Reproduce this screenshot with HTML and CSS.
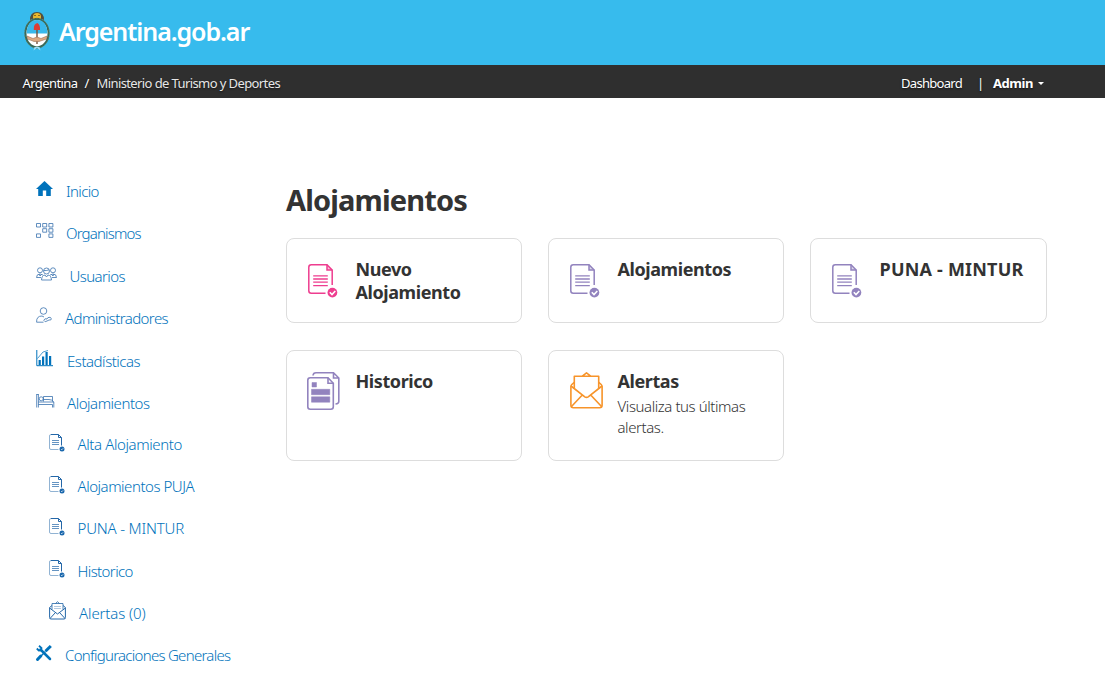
FILE: index.html
```
<!DOCTYPE html>
<html lang="es">
<head>
<meta charset="utf-8">
<title>Alojamientos - Argentina.gob.ar</title>
<link rel="stylesheet" href="styles.css">
</head>
<body>
<svg class="sprite" aria-hidden="true">
  <symbol id="doc" viewBox="0 0 30 34">
    <g fill="none" stroke="currentColor" stroke-width="1.5">
      <path d="M17.5 29.2H3.3Q.8 29.2 .8 26.7V3.3Q.8 .8 3.3 .8H19L24.2 6V21"/>
      <path d="M19 .8V6H24.2" fill="currentColor" fill-opacity=".3"/>
      <path d="M5.2 11.8H19.8M5.2 15H19.8M5.2 18.2H19.8M5.2 21.6H19.8" stroke-width="1.3"/>
    </g>
    <circle cx="24.4" cy="28.6" r="4.9" fill="currentColor"/>
    <path d="M21.8 28.3L24 30.5L27.3 27" fill="none" stroke="#fff" stroke-width="1.6"/>
  </symbol>
  <symbol id="doc-sm" viewBox="0 0 16 18">
    <g fill="none" stroke="#2467a8">
      <path d="M9.5 15.5H2Q.5 15.5 .5 14V2Q.5 .5 2 .5" opacity=".5"/>
      <path d="M2 .5H9.5L12.5 3.5V11.5"/><path d="M9.5 .5V3.5H12.5"/>
      <path d="M3 6.5H10M3 8.5H10M3 10.5H10" opacity=".7"/>
    </g>
    <circle cx="13" cy="15" r="2.5" fill="#1b68ad"/>
    <path d="M12 15l.8.8 1.4-1.5" fill="none" stroke="#fff" stroke-width=".7"/>
  </symbol>
</svg>

<header class="brand">
  <svg class="crest" viewBox="0 0 28 40">
    <path d="M7 9Q7 1 14 1T21 9Q14 5 7 9Z" fill="#54503c"/>
    <circle cx="14" cy="6" r="4" fill="#e9b92d"/>
    <path d="M11 4.5h2m2 0h2M12 7.5h4" stroke="#71551d" stroke-width=".8"/>
    <ellipse cx="14" cy="22.2" rx="11.5" ry="14.2" fill="#fff" stroke="#35685a" stroke-width="2"/>
    <ellipse cx="14" cy="22.2" rx="12.2" ry="15" fill="none" stroke="#7c8050" stroke-width=".7" stroke-dasharray="1.5 1.5"/>
    <path d="M3.6 22.5Q4 9 14 9T24.4 22.5Z" fill="#38b8ec"/>
    <path d="M14 18V33" stroke="#75513b" stroke-width="1.4"/>
    <path d="M10.8 19Q10.4 12.5 14.5 12Q17.4 14 17 19Z" fill="#dc3d36"/>
    <path d="M4 25L10 27.5L14 26L18 27.5L24 25L23.5 28L16 30.5L11 30.5L4.5 28Z" fill="#dda982" stroke="#9d7158" stroke-width=".6"/>
    <path d="M11.5 36L10.5 39.5L14 37L17.5 39.5L16.5 36Z" fill="#9bdcf5"/>
  </svg>
  <span class="brand-name">Argentina.gob.ar</span>
</header>

<nav class="topbar">
  <div class="crumbs"><span class="crumb-home">Argentina</span><span class="crumb-sep">/</span><span class="crumb-here">Ministerio de Turismo y Deportes</span></div>
  <div class="account"><span class="dash">Dashboard</span><span class="bar">|</span><b class="admin">Admin</b><i class="caret"></i></div>
</nav>

<div class="page">
  <ul class="menu">
    <li><span class="ico"><svg width="17" height="15" viewBox="0 0 17 15"><path d="M8.5 0L17 8H14.8V15H10.2V9.5H6.8V15H2.2V8H0Z" fill="currentColor"/></svg></span><a class="s6">Inicio</a></li>
    <li><span class="ico"><svg width="18" height="15" viewBox="0 0 18 15"><g class="thin"><path d="M.5.5h4v3.5h-4zM6.7.5h4v3.5h-4zM12.9.5h4v3.5h-4zM6.7 5.7h4v3.5h-4zM12.9 5.7h4v3.5h-4zM.5 10.9h4v3.5h-4zM12.9 10.9h4v3.5h-4z"/></g></svg></span><a class="s8">Organismos</a></li>
    <li class="low"><span class="ico wide"><svg width="21" height="14" viewBox="0 0 21 14"><g class="thin"><circle cx="4" cy="3.3" r="2.5"/><circle cx="17" cy="3.3" r="2.5"/><circle cx="10.5" cy="4" r="3"/><path d="M.5 10.5Q.5 7 4 7L7 8M20.5 10.5Q20.5 7 17 7L14 8M.5 10.5H5M20.5 10.5H16M5.5 13Q5.8 8.3 9 8L10.5 10L12 8Q15.2 8.3 15.5 13ZM3 7L4 9L5.5 7.5M18 7L17 9L15.5 7.5M8 3.5Q10 4 13 2.8"/></g></svg></span><a class="s5">Usuarios</a></li>
    <li><span class="ico short"><svg width="16" height="16" viewBox="0 0 16 16"><g class="thin"><circle cx="7.5" cy="4" r="3.3"/><path d="M7.5 15.2H.6Q.3 9 6 9L8 10M7.8 13.3Q9 15.8 11 14L13 13Q15.5 13.5 15.3 11.8Q15 10 13 10.3Q11.5 10.5 11 12Q8.5 11 7.8 13.3Z"/></g></svg></span><a class="s5">Administradores</a></li>
    <li class="low"><span class="ico chart"><svg width="17" height="17" viewBox="0 0 17 17"><path d="M.8 0V15.7H17" fill="none" stroke="currentColor" stroke-width="1"/><path d="M2.6 10h2.2v5H2.6zM6 6.5h2.2V15H6zM9.5 2h2.2v13H9.5zM13 6h2.2v9H13z" fill="currentColor"/><path d="M1.5 8.5L7 2L12 .5" fill="none" stroke="currentColor" stroke-width=".7"/></svg></span><a class="s4">Estadísticas</a></li>
    <li class="low"><span class="ico chart"><svg width="19" height="14" viewBox="0 0 19 14"><g class="thin"><path d="M.7 0V13.5M2.4 0V13.5M2.4 10.5H16.5M2.4 8H17.8V13.5M16.5 10.5V13.5M.7 .5H2.4"/><circle cx="5.2" cy="4.8" r="2"/><path d="M7.5 7.5V2.5H16.5V7.5M7.5 5.5H13Q16 5.5 17.8 8"/></g></svg></span><a class="s4">Alojamientos</a></li>
    <li class="sub"><span class="ico"><svg width="16" height="18"><use href="#doc-sm"/></svg></span><a class="s3">Alta Alojamiento</a></li>
    <li class="sub"><span class="ico"><svg width="16" height="18"><use href="#doc-sm"/></svg></span><a class="s4">Alojamientos PUJA</a></li>
    <li class="sub high"><span class="ico"><svg width="16" height="18"><use href="#doc-sm"/></svg></span><a class="s1">PUNA - MINTUR</a></li>
    <li class="sub"><span class="ico"><svg width="16" height="18"><use href="#doc-sm"/></svg></span><a class="s5">Historico</a></li>
    <li class="sub"><span class="ico mail"><svg width="17" height="19" viewBox="0 0 17 19"><g fill="none" stroke="#2467a8"><path d="M.6 6.5V16.5Q.6 18 2 18H15Q16.4 18 16.4 16.5V6.5"/><path d="M.6 7L8.5 13L16.4 7M1 17.5L6.5 11.5M16 17.5L10.5 11.5M.6 6.5L3 4.5M16.4 6.5L14 4.5"/><path d="M3 8.5V2.5H14V8.5M6.5 2.5L8.5 .7L10.5 2.5" opacity=".8"/><path d="M5 5.5H12M5 7.5H12" opacity=".35"/></g></svg></span><a class="s0">Alertas (0)</a></li>
    <li><span class="ico short"><svg width="16" height="16" viewBox="0 0 16 16"><g stroke="currentColor" fill="none"><path d="M4.5 4.5L14 14" stroke-width="2.5" stroke-linecap="round"/><path d="M3 .8L5.5 3L5 5.3L2.8 5.5L.8 3.5" stroke-width="1.8"/><path d="M14.8 1L9.5 6.3" stroke-width="3"/><path d="M9.5 6.5L4.5 11.5" stroke-width="1.4"/><path d="M4.8 11L1.5 14.5" stroke-width="3" stroke-linecap="round"/></g></svg></span><a class="s7">Configuraciones Generales</a></li>
  </ul>

  <main class="content">
    <h1>Alojamientos</h1>
    <div class="cards">
      <section class="card pink"><div class="pic"><svg width="30" height="34"><use href="#doc"/></svg></div><div><h2>Nuevo<br>Alojamiento</h2></div></section>
      <section class="card"><div class="pic"><svg width="30" height="34"><use href="#doc"/></svg></div><div><h2>Alojamientos</h2></div></section>
      <section class="card"><div class="pic"><svg width="30" height="34"><use href="#doc"/></svg></div><div><h2 class="caps">PUNA - MINTUR</h2></div></section>
      <section class="card tall"><div class="pic"><svg width="33" height="38" viewBox="0 0 33 38"><g fill="none" stroke="currentColor" stroke-width="1.6"><path d="M.8 8.3Q.8 5.8 3.3 5.8H21L26.3 11.3V34.7Q26.3 37.2 23.8 37.2H3.3Q.8 37.2 .8 34.7Z"/><path d="M21 5.8V11.3H26.3M6 3.5Q6.3 .8 9 .8H26.5L31.8 6V29.5Q31.8 31.8 28.5 32M26.5 .8V6H31.8"/></g><path d="M5 10.5h4.5V15H5zM4.5 17.3h18.3v5.4H4.5zM4.5 24.8h18.3v5.4H4.5z" fill="currentColor" stroke="currentColor" stroke-width=".5" stroke-linejoin="round"/></svg></div><div><h2>Historico</h2></div></section>
      <section class="card tall orange"><div class="pic"><svg width="33" height="37" viewBox="0 0 33 37"><g fill="none" stroke="currentColor" stroke-width="1.6" stroke-linejoin="round"><path d="M4.3 10.3L1.8 12.5Q.9 13.3 .9 14.5V33.3Q.9 35.8 3.4 35.8H29.6Q32.1 35.8 32.1 33.3V14.5Q32.1 13.3 31.2 12.5L28.7 10.3"/><path d="M4.3 17V4.3H28.7V17M12 4.3L16.5 .9L21 4.3"/><path d="M1 14L14.8 24.8Q16.5 26 18.2 24.8L32 14M1.5 34.5L12.3 23M31.5 34.5L20.7 23"/></g></svg></div><div><h2>Alertas</h2><p>Visualiza tus últimas<br>alertas.</p></div></section>
    </div>
  </main>
</div>
</body>
</html>
```
FILE: styles.css
```
* { box-sizing: border-box; }
body { margin: 0; background: #fff; color: #333; font-family: "Noto Sans", sans-serif; }
h1, h2, p, ul { margin: 0; padding: 0; }
svg { display: block; overflow: visible; }
.sprite { width: 0; height: 0; overflow: hidden; float: left; }

.brand { display: flex; height: 65px; padding: 11px 0 0 23px; background: #37bbed; }
.crest { width: 28px; height: 40px; }
.brand-name { margin-left: 8px; margin-top: 2px; color: #fff; font-size: 25px; line-height: 36px; font-weight: 600; letter-spacing: -1.08px; white-space: nowrap; }

.topbar { display: flex; justify-content: space-between; height: 33px; padding: 1.5px 61px 0 22.5px; background: #2f2f2f; color: #fff; font-size: 13px; line-height: 33px; text-shadow: 0 1px 2px rgba(0,0,0,.6); white-space: nowrap; }
.crumbs, .account { display: flex; }
.crumb-home { width: 62px; letter-spacing: -.6px; }
.crumb-sep { width: 12px; }
.crumb-here { color: #e6e6e6; letter-spacing: -.6px; }
.dash { width: 76px; letter-spacing: -.7px; }
.bar { width: 16px; }
.admin { letter-spacing: -.45px; }
.caret { width: 6px; margin: 15.5px 0 0 5px; height: 3px; border: 3px solid transparent; border-top-color: #fff; border-bottom: 0; }

.page { display: flex; padding: 72px 0 0 36px; }
.menu { width: 250px; list-style: none; color: #0072bb; }
.menu li { display: flex; align-items: center; height: 42.2px; font-size: 15px; font-weight: 340; white-space: nowrap; }
.menu .low { padding-top: 2px; }
.menu .high { padding-bottom: 1.5px; }
.menu .sub { padding-left: 13px; }
.ico { width: 30px; padding-bottom: 5px; }
.sub .ico { width: 28.5px; padding-bottom: 3px; }
.sub.high .ico { padding-bottom: 2px; }
.ico.wide { width: 33.5px; }
.ico.short { width: 29px; }
.ico.chart { width: 31px; }
.sub .ico.mail { width: 30px; padding-bottom: 5px; }
.thin { fill: none; stroke: #3a72ae; stroke-width: .8; }
.s0 { letter-spacing: -.12px; }
.s1 { letter-spacing: -.18px; }
.s3 { letter-spacing: -.4px; }
.s4 { letter-spacing: -.47px; }
.s5 { letter-spacing: -.6px; }
.s6 { letter-spacing: -.65px; }
.s7 { letter-spacing: -.72px; }
.s8 { letter-spacing: -.84px; }

.content { width: 761px; padding-top: 9px; }
h1 { height: 59px; font-size: 29px; line-height: 42px; letter-spacing: -.85px; }
.cards { display: grid; grid-template-columns: 236px 236px 237px; grid-template-rows: 85px 111px; gap: 27px 26px; }
.card { display: flex; padding: 19px 0 0 21px; border: 1px solid #ddd; border-radius: 8px; color: #9283be; }
.pink { color: #ee3d8f; }
.orange { color: #f7942a; }
.pic { width: 47.5px; padding: 6px 0 0; }
.tall .pic { padding-top: 2px; margin-left: -1px; width: 48.5px; }
.orange .pic { margin-left: -.5px; width: 48px; }
h2 { color: #333; font-size: 18px; line-height: 23px; letter-spacing: -.42px; white-space: nowrap; }
.caps { letter-spacing: .2px; }
p { margin-top: 3px; color: #333; font-size: 15px; line-height: 21px; font-weight: 340; letter-spacing: -.42px; }
```
